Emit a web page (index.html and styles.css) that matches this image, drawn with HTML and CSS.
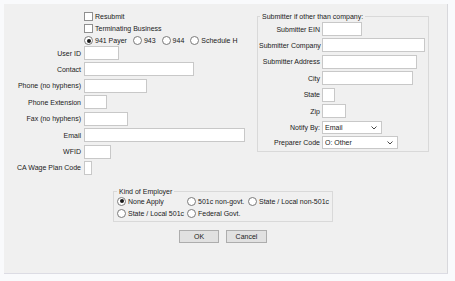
FILE: index.html
```html
<!DOCTYPE html>
<html lang="en">
<head>
    <meta charset="UTF-8">
    <meta name="viewport" content="width=device-width, initial-scale=1.0">
    <title>Company Settings</title>
    <link rel="stylesheet" href="styles.css">
</head>
<body>
    <div class="dialog">
        <div class="top">
            <div class="main">
                <div class="options">
                    <label class="opt"><input type="checkbox"> Resubmit</label>
                    <label class="opt"><input type="checkbox"> Terminating Business</label>
                    <div class="radios">
                        <label class="opt"><input type="radio" name="payer" checked> 941 Payer</label>
                        <label class="opt"><input type="radio" name="payer"> 943</label>
                        <label class="opt"><input type="radio" name="payer"> 944</label>
                        <label class="opt"><input type="radio" name="payer"> Schedule H</label>
                    </div>
                </div>
                <div class="fields">
                    <label for="userId">User ID</label>
                    <input type="text" id="userId" class="w35">
                    <label for="contact">Contact</label>
                    <input type="text" id="contact" class="w110">
                    <label for="phone">Phone (no hyphens)</label>
                    <input type="text" id="phone" class="w63">
                    <label for="ext">Phone Extension</label>
                    <input type="text" id="ext" class="w23">
                    <label for="fax">Fax (no hyphens)</label>
                    <input type="text" id="fax" class="w44">
                    <label for="email">Email</label>
                    <input type="text" id="email" class="w161">
                    <label for="wfid">WFID</label>
                    <input type="text" id="wfid" class="w27">
                    <label for="caCode">CA Wage Plan Code</label>
                    <input type="text" id="caCode" class="w8">
                </div>
            </div>

            <fieldset class="submitter">
                <legend>Submitter if other than company:</legend>
                <div class="fields sub-fields">
                    <label for="subEin">Submitter EIN</label>
                    <input type="text" id="subEin" class="w40">
                    <label for="subCompany">Submitter Company</label>
                    <input type="text" id="subCompany" class="w103">
                    <label for="subAddress">Submitter Address</label>
                    <input type="text" id="subAddress" class="w95">
                    <label for="city">City</label>
                    <input type="text" id="city" class="w91">
                    <label for="state">State</label>
                    <input type="text" id="state" class="w13">
                    <label for="zip">Zip</label>
                    <input type="text" id="zip" class="w24">
                    <label for="notify">Notify By:</label>
                    <span class="combo w60">
                        <select id="notify">
                            <option>Email</option>
                            <option>Fax</option>
                        </select>
                        <svg class="arrow" width="6" height="4" viewBox="0 0 6 4"><path d="M0.5 0.5 L3 3 L5.5 0.5" fill="none" stroke="#333" stroke-width="0.9"/></svg>
                    </span>
                    <label for="preparer">Preparer Code</label>
                    <span class="combo w76">
                        <select id="preparer">
                            <option>O: Other</option>
                            <option>A: Accounting Firm</option>
                        </select>
                        <svg class="arrow" width="6" height="4" viewBox="0 0 6 4"><path d="M0.5 0.5 L3 3 L5.5 0.5" fill="none" stroke="#333" stroke-width="0.9"/></svg>
                    </span>
                </div>
            </fieldset>
        </div>

        <fieldset class="kind">
            <legend>Kind of Employer</legend>
            <div class="kind-grid">
                <label class="opt"><input type="radio" name="kind" checked> None Apply</label>
                <label class="opt"><input type="radio" name="kind"> 501c non-govt.</label>
                <label class="opt"><input type="radio" name="kind"> State / Local non-501c</label>
                <label class="opt"><input type="radio" name="kind"> State / Local 501c</label>
                <label class="opt"><input type="radio" name="kind"> Federal Govt.</label>
            </div>
        </fieldset>

        <div class="buttons">
            <button type="button" class="ok">OK</button>
            <button type="button" class="cancel">Cancel</button>
        </div>
    </div>
</body>
</html>
```

FILE: styles.css
```css
body {
    margin: 0;
    background-color: #f9fafc;
    font-family: "Liberation Sans", Arial, sans-serif;
    font-size: 7px;
    color: #1a1a1a;
}
.dialog {
    margin: 4px 0 0 4px;
    width: 444px;
    height: 270px;
    box-sizing: border-box;
    padding-top: 8px;
    background: #f0f0f0;
    border-right: 1px solid #d8d8dc;
    border-bottom: 1px solid #dcdce4;
}
.top {
    display: flex;
    align-items: flex-start;
}
.main {
    flex: 0 0 253px;
}
.options {
    margin-left: 80px;
    display: flex;
    flex-direction: column;
    gap: 3px;
    margin-bottom: 1px;
}
.opt {
    display: flex;
    align-items: center;
    gap: 2px;
    height: 9px;
    white-space: nowrap;
}
.radios {
    display: flex;
    gap: 6px;
}
input[type="checkbox"], input[type="radio"] {
    appearance: none;
    margin: 0;
    width: 9px;
    height: 9px;
    box-sizing: border-box;
    background: white;
    border: 1px solid #8f8f8f;
    flex: none;
}
input[type="radio"] {
    border-radius: 50%;
    border-color: #7a7a7a;
    position: relative;
}
input[type="radio"]:checked::after {
    content: "";
    position: absolute;
    left: 1.5px;
    top: 1.5px;
    width: 4px;
    height: 4px;
    border-radius: 50%;
    background: #1a1a1a;
}
.fields {
    display: grid;
    grid-template-columns: 77px auto;
    column-gap: 3px;
    row-gap: 2.43px;
    align-items: center;
}
.fields label {
    text-align: right;
    white-space: nowrap;
}
.fields input[type="text"] {
    height: 14px;
    box-sizing: border-box;
    margin: 0;
    padding: 0 2px;
    border: 1px solid #c8c8c8;
    background: white;
    font: inherit;
}
fieldset {
    margin: 0;
    border: 1px solid #d9d9d9;
}
legend {
    padding: 0 2px;
    line-height: 9px;
}
.submitter {
    width: 172px;
    box-sizing: border-box;
    padding: 1px 3px 2px 1px;
}
.submitter legend {
    margin-left: 1px;
}
.sub-fields {
    grid-template-columns: 61px auto;
    column-gap: 2px;
}
.combo {
    position: relative;
    display: block;
    height: 13px;
}
.combo select {
    appearance: none;
    width: 100%;
    height: 13px;
    margin: 0;
    padding: 0 0 0 2px;
    border: 1px solid #c8c8c8;
    border-radius: 0;
    background: white;
    font: inherit;
    color: #1a1a1a;
}
.combo .arrow {
    position: absolute;
    right: 5px;
    top: 5px;
}
.kind {
    width: 219px;
    box-sizing: border-box;
    margin: 12px 0 0 109px;
    padding: 1px 3px 3px 3px;
}
.kind-grid {
    display: grid;
    grid-template-columns: 70px 61px auto;
    row-gap: 3px;
}
.buttons {
    display: flex;
    gap: 7px;
    margin: 8px 0 0 175px;
}
button {
    height: 13px;
    padding: 0;
    background: #e1e1e1;
    border: 1px solid #adadad;
    font: inherit;
    color: #1a1a1a;
}
.ok { width: 40px; }
.cancel { width: 41px; }

.w8 { width: 8px; }
.w13 { width: 13px; }
.w23 { width: 23px; }
.w24 { width: 24px; }
.w27 { width: 27px; }
.w35 { width: 35px; }
.w40 { width: 40px; }
.w44 { width: 44px; }
.w60 { width: 60px; }
.w63 { width: 63px; }
.w76 { width: 76px; }
.w91 { width: 91px; }
.w95 { width: 95px; }
.w103 { width: 103px; }
.w110 { width: 110px; }
.w161 { width: 161px; }
```
